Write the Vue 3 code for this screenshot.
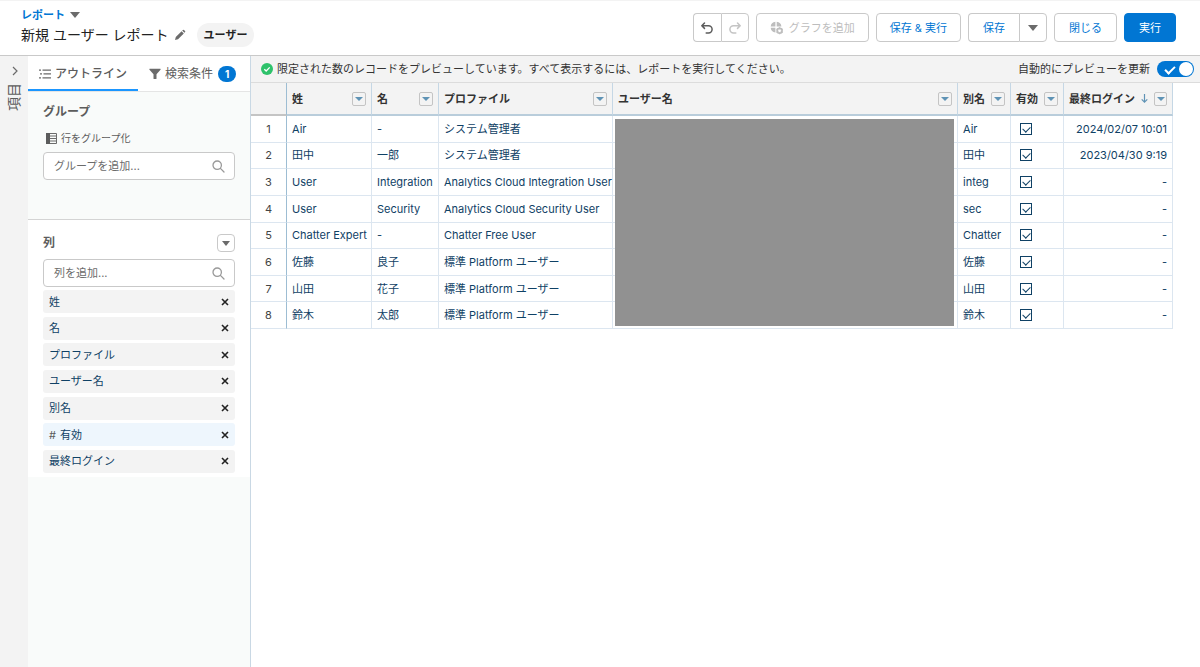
<script setup>
import {ref} from 'vue';

// プレビュー表の列定義
const columns = [
  { key: 'last', label: '姓' },
  { key: 'first', label: '名' },
  { key: 'profile', label: 'プロファイル' },
  { key: 'username', label: 'ユーザー名' },
  { key: 'alias', label: '別名' },
  { key: 'active', label: '有効' },
  { key: 'login', label: '最終ログイン', sorted: true }
];

// プレビュー表のレコード
const rows = [
  { last: 'Air', first: '-', profile: 'システム管理者', alias: 'Air', login: '2024/02/07 10:01' },
  { last: '田中', first: '一郎', profile: 'システム管理者', alias: '田中', login: '2023/04/30 9:19' },
  { last: 'User', first: 'Integration', profile: 'Analytics Cloud Integration User', alias: 'integ', login: '-' },
  { last: 'User', first: 'Security', profile: 'Analytics Cloud Security User', alias: 'sec', login: '-' },
  { last: 'Chatter Expert', first: '-', profile: 'Chatter Free User', alias: 'Chatter', login: '-' },
  { last: '佐藤', first: '良子', profile: '標準 Platform ユーザー', alias: '佐藤', login: '-' },
  { last: '山田', first: '花子', profile: '標準 Platform ユーザー', alias: '山田', login: '-' },
  { last: '鈴木', first: '太郎', profile: '標準 Platform ユーザー', alias: '鈴木', login: '-' }
];

const autoPreview = ref(true);
const groupText = ref('');
const columnText = ref('');
</script>

<template>
  <div class="page">
    <header class="header">
      <div class="titles">
        <a href="#" class="crumb">レポート<span class="caret"></span></a>
        <div class="title-row">
          <h1>新規 ユーザー レポート</h1>
          <button class="plain" aria-label="名前を編集">
            <svg width="12" height="12" viewBox="0 0 12 12" fill="#6b6b6b"><path d="M1 11l.8-3L7.600 2.200l2.200 2.200L4 10.200zM8.200 1.600l.7-.7q.5-.4 1 0l1.200 1.200q.4.500 0 1l-.7.700z"/></svg>
          </button>
          <span class="pill">ユーザー</span>
        </div>
      </div>
      <div class="actions">
        <div class="joined">
          <button class="btn icon" aria-label="元に戻す">
            <svg width="14" height="14" viewBox="0 0 14 14" fill="none" stroke="#5c5c5c" stroke-width="1.500" stroke-linecap="round" stroke-linejoin="round"><path d="M4.500 2L1.800 4.700l2.700 2.700M2 4.700h6.500a3.600 3.600 0 0 1 0 7.200H6.200"/></svg>
          </button>
          <button class="btn icon" aria-label="やり直す" disabled>
            <svg width="14" height="14" viewBox="0 0 14 14" fill="none" stroke="#c4c4c4" stroke-width="1.500" stroke-linecap="round" stroke-linejoin="round"><path d="M9.500 2l2.700 2.700-2.700 2.700M12 4.700H5.500a3.600 3.600 0 0 0 0 7.200h2.300"/></svg>
          </button>
        </div>
        <button class="btn long" disabled>
          <svg width="14" height="14" viewBox="0 0 14 14"><path fill="#bdbdbd" d="M5.400.8v4.700H.7A5.200 5.200 0 0 1 5.400.8zM6.700.8a5.200 5.200 0 0 1 4.700 4.700H6.700zM.7 6.800h4.700v4.700A5.200 5.200 0 0 1 .7 6.800z"/><circle cx="9.600" cy="9.800" r="2.500" fill="none" stroke="#bdbdbd" stroke-width="1.600"/><path stroke="#bdbdbd" stroke-width="1.200" d="M9.600 6.300v7M6.600 8.100l6 3.500M12.600 8.100l-6 3.500"/><circle cx="9.600" cy="9.800" r="1.400" fill="#fff"/></svg>
          グラフを追加
        </button>
        <button class="btn long">保存 &amp; 実行</button>
        <div class="joined">
          <button class="btn">保存</button>
          <button class="btn icon" aria-label="その他の保存オプション"><span class="caret"></span></button>
        </div>
        <button class="btn">閉じる</button>
        <button class="btn brand">実行</button>
      </div>
    </header>

    <div class="body">
      <aside class="fields">
        <button class="plain" aria-label="項目パネルを開く">
          <svg width="8" height="10" viewBox="0 0 8 10" fill="none" stroke="#6b6b6b" stroke-width="1.200"><path d="M3 1l4 4-4 4"/></svg>
        </button>
        <span class="fields-label">項目</span>
      </aside>

      <aside class="panel">
        <nav class="tabs">
          <button class="tab current">
            <svg width="12" height="10" viewBox="0 0 12 10" fill="#6b6b6b"><path d="M0 .5h2v1.300H0zM3.500.5H12v1.300H3.500zM1 4.300h2v1.300H1zM4.500 4.300H12v1.300H4.500zM0 8.200h2v1.300H0zM3.500 8.200H12v1.300H3.500z"/></svg>
            アウトライン
          </button>
          <button class="tab">
            <svg width="12" height="12" viewBox="0 0 12 12" fill="#6b6b6b"><path d="M.6.8h10.800q.5.300.1.900L7.500 6.300v4.200q0 .6-.6.600H5.100q-.6 0-.6-.6V6.300L.5 1.700Q.1 1.100.6.8z"/></svg>
            検索条件
            <span class="badge">1</span>
          </button>
        </nav>

        <section class="groups">
          <h2>グループ</h2>
          <label for="group-add" class="sub-label">
            <svg width="11" height="11" viewBox="0 0 11 11"><path fill="none" stroke="#6b6b6b" d="M.5.500h10v10H.5zM4 3h6M4 5.500h6M4 8h6"/><path fill="#5c5c5c" d="M0 0h4v11H0z"/></svg>
            行をグループ化
          </label>
          <div class="search">
            <input id="group-add" v-model="groupText" type="text" placeholder="グループを追加...">
            <svg width="13" height="13" viewBox="0 0 13 13" fill="none" stroke="#999" stroke-width="1.300" stroke-linecap="round"><circle cx="5.200" cy="5.200" r="4.200"/><path d="M8.400 8.400l3.600 3.600"/></svg>
          </div>
        </section>

        <section class="columns">
          <div class="columns-head">
            <h2><label for="column-add">列</label></h2>
            <button class="menu-button" aria-label="列のアクション"><span class="caret"></span></button>
          </div>
          <div class="search">
            <input id="column-add" v-model="columnText" type="text" placeholder="列を追加...">
            <svg width="13" height="13" viewBox="0 0 13 13" fill="none" stroke="#999" stroke-width="1.300" stroke-linecap="round"><circle cx="5.200" cy="5.200" r="4.200"/><path d="M8.400 8.400l3.600 3.600"/></svg>
          </div>
          <ul class="chips">
            <li v-for="col in columns" :key="col.key" :class="['chip', { numeric: col.key === 'active' }]">
              <span><span v-if="col.key === 'active'" class="hash">#</span>{{ col.label }}</span>
              <button class="plain" :aria-label="col.label + 'を削除'">
                <svg width="8" height="8" viewBox="0 0 8 8" stroke="#222" stroke-width="1.600"><path d="M1 1l6 6M7 1L1 7"/></svg>
              </button>
            </li>
          </ul>
        </section>
      </aside>

      <main class="preview">
        <div class="notice">
          <svg width="12" height="12" viewBox="0 0 12 12"><circle cx="6" cy="6" r="6" fill="#2ec26b"/><path d="M3.300 6.200l1.900 1.800 3.500-3.600" fill="none" stroke="#fff" stroke-width="1.300"/></svg>
          <span class="notice-text">限定された数のレコードをプレビューしています。すべて表示するには、レポートを実行してください。</span>
          <label for="auto-preview">自動的にプレビューを更新</label>
          <input id="auto-preview" v-model="autoPreview" type="checkbox" class="toggle">
        </div>
        <div class="sheet">
          <table>
            <colgroup>
              <col class="w-num">
              <col v-for="col in columns" :key="col.key" :class="'w-' + col.key">
            </colgroup>
            <thead>
              <tr>
                <th class="num"></th>
                <th v-for="col in columns" :key="col.key">
                  <div class="th-inner">
                    <span class="th-label">{{ col.label }}</span>
                    <svg v-if="col.sorted" width="7" height="9" viewBox="0 0 7 9" fill="none" stroke="#5f93b5" stroke-width="1.200"><path d="M3.500 0v8M.7 5.300l2.800 2.800 2.800-2.800"/></svg>
                    <button class="sort" :aria-label="col.label + 'のアクション'"><span></span></button>
                  </div>
                </th>
              </tr>
            </thead>
            <tbody>
              <tr v-for="(row, index) in rows" :key="index">
                <td class="num">{{ index + 1 }}</td>
                <td>{{ row.last }}</td>
                <td>{{ row.first }}</td>
                <td>{{ row.profile }}</td>
                <td></td>
                <td>{{ row.alias }}</td>
                <td><input type="checkbox" class="check" checked :aria-label="row.last + ' 有効'"></td>
                <td class="right">{{ row.login }}</td>
              </tr>
            </tbody>
          </table>
          <div class="mask"></div>
        </div>
      </main>
    </div>
  </div>
</template>

<style>
body {
  margin: 0;
}
</style>

<style scoped>
.page {
  display: flex;
  flex-direction: column;
  min-height: 100vh;
  box-sizing: border-box;
  border-top: 1px solid #f3f3f3;
  font-family: Inter, "Noto Sans CJK JP", sans-serif;
  font-size: 11px;
  line-height: 16px;
  color: #333;
  background: #fff;
}

.page * {
  box-sizing: border-box;
}

button, input {
  font: inherit;
  color: inherit;
  margin: 0;
}

button {
  cursor: pointer;
}

h1, h2 {
  margin: 0;
}

svg {
  display: block;
  flex: none;
}

.plain {
  display: flex;
  padding: 0;
  border: 0;
  background: none;
}

.caret {
  display: inline-block;
  border: 5px solid transparent;
  border-top: 6px solid #6b6b6b;
  border-bottom: 0;
}

/* ヘッダー */
.header {
  display: flex;
  justify-content: space-between;
  height: 55px;
  padding: 0 24px 0 21px;
  border-bottom: 1px solid #c9c9c9;
}

.titles {
  padding-top: 6px;
}

.crumb {
  display: flex;
  align-items: center;
  gap: 5px;
  color: #0176d3;
  font-weight: 700;
  text-decoration: none;
}

.title-row {
  display: flex;
  align-items: center;
  gap: 5px;
}

.title-row h1 {
  font-size: 14px;
  font-weight: 400;
  line-height: 24px;
  color: #222;
}

.pill {
  margin-left: 6px;
  padding: 4px 7px;
  border-radius: 12px;
  background: #f3f3f3;
  color: #222;
  font-weight: 700;
}

.actions {
  display: flex;
  gap: 7px;
  padding-top: 12px;
}

.joined {
  display: flex;
}

.btn {
  display: flex;
  align-items: center;
  justify-content: center;
  gap: 5px;
  height: 29px;
  padding: 0 14px;
  border: 1px solid #c9c9c9;
  border-radius: 4px;
  background: #fff;
  color: #0176d3;
  white-space: nowrap;
}

.btn.long {
  padding: 0 13px;
}

.btn:disabled {
  color: #bdbdbd;
}

.btn.icon {
  width: 28px;
  padding: 0;
}

.btn.brand {
  border-color: #0176d3;
  background: #0176d3;
  color: #fff;
}

.joined .btn:first-child {
  border-radius: 4px 0 0 4px;
  border-right: 0;
}

.joined .btn:last-child {
  border-radius: 0 4px 4px 0;
}

/* 本体 */
.body {
  display: flex;
  flex: 1;
}

.fields {
  display: flex;
  flex-direction: column;
  align-items: center;
  gap: 7px;
  width: 28px;
  padding-top: 10px;
  background: #f3f3f3;
}

.fields-label {
  writing-mode: vertical-rl;
  text-orientation: sideways;
  transform: rotate(180deg);
  font-size: 14px;
  color: #5c5c5c;
}

.panel {
  width: 223px;
  border-right: 1px solid #c9d8e4;
  background: #f9fbfa;
}

.tabs {
  display: flex;
  height: 36px;
  border-bottom: 1px solid #e5e5e5;
  background: #fff;
}

.tab {
  display: flex;
  align-items: center;
  gap: 4px;
  height: 35px;
  padding: 2px 11px 0;
  border: 0;
  border-bottom: 2px solid transparent;
  background: none;
  font-size: 12px;
  color: #5c5c5c;
  white-space: nowrap;
}

.tab.current {
  border-bottom-color: #1b96ff;
  font-weight: 500;
}

.badge {
  width: 18px;
  margin-left: 1px;
  border-radius: 8px;
  background: #0176d3;
  color: #fff;
  font-size: 10px;
  font-weight: 700;
}

.groups {
  height: 128px;
  padding: 11px 15px 0;
  border-bottom: 1px solid #d4d4d4;
}

.panel h2 {
  font-size: 12px;
  font-weight: 700;
  line-height: 18px;
  color: #5c5c5c;
}

.sub-label {
  display: flex;
  align-items: center;
  gap: 4px;
  padding: 9px 3px 6px;
  font-size: 10px;
  color: #5c5c5c;
}

.search {
  display: flex;
  align-items: center;
  height: 28px;
  padding: 0 9px 0 10px;
  border: 1px solid #c9c9c9;
  border-radius: 4px;
  background: #fff;
}

.search input {
  flex: 1;
  min-width: 0;
  padding: 0;
  border: 0;
  outline: 0;
  background: none;
}

.search input::placeholder {
  color: #6b6b6b;
}

.columns {
  padding: 14px 15px 4px;
  background: #fff;
}

.columns-head {
  display: flex;
  align-items: center;
  justify-content: space-between;
  padding-bottom: 7px;
}

.menu-button {
  display: flex;
  align-items: center;
  justify-content: center;
  width: 18px;
  height: 18px;
  padding: 0;
  border: 1px solid #c9c9c9;
  border-radius: 4px;
  background: #fff;
}

.menu-button .caret {
  border-width: 5px 4px 0;
}

.chips {
  display: flex;
  flex-direction: column;
  justify-content: space-between;
  height: 183px;
  margin: 3px 0 0;
  padding: 0;
  list-style: none;
}

.chip {
  display: flex;
  align-items: center;
  justify-content: space-between;
  height: 23px;
  padding: 0 6px;
  border-radius: 3px;
  background: #f3f3f3;
  color: #0f4165;
}

.chip.numeric {
  background: #eef6fd;
}

.hash {
  margin-right: 4px;
  color: #5c5c5c;
}

/* プレビュー */
.preview {
  flex: 1;
  min-width: 0;
}

.notice {
  display: flex;
  align-items: center;
  gap: 4px;
  height: 27px;
  padding: 0 6px 0 10px;
  border-bottom: 1px solid #dcdcdc;
  background: #f3f3f3;
}

.notice-text {
  flex: 1;
}

.toggle {
  display: flex;
  align-items: center;
  appearance: none;
  position: relative;
  width: 37px;
  height: 16px;
  margin-left: 3px;
  border-radius: 8px;
  background: #8c8c8c;
}

.toggle::before {
  content: '';
  position: absolute;
  left: 1px;
  width: 14px;
  height: 14px;
  border-radius: 7px;
  background: #fff;
}

.toggle:checked {
  background: #0176d3;
}

.toggle:checked::before {
  left: 22px;
}

.toggle:checked::after {
  content: '';
  position: absolute;
  left: 10px;
  top: 3px;
  width: 4px;
  height: 8px;
  border: solid #fff;
  border-width: 0 2px 2px 0;
  transform: rotate(45deg);
}

.sheet {
  position: relative;
  margin-right: 27px;
}

table {
  width: 100%;
  height: 246px;
  table-layout: fixed;
  border-collapse: separate;
  border-spacing: 0;
}

.w-num {
  width: 36px;
}

.w-last {
  width: 85px;
}

.w-first {
  width: 67px;
}

.w-profile {
  width: 174px;
}

.w-alias,
.w-active {
  width: 53px;
}

.w-login {
  width: 109px;
}

th {
  height: 33px;
  padding: 0 5px;
  border-right: 1px solid #c5d7e5;
  border-bottom: 2px solid #b9cddb;
  background: #f3f3f3;
  font-weight: 700;
  text-align: left;
}

.th-inner {
  display: flex;
  align-items: center;
  gap: 6px;
}

.th-label {
  flex: 1;
  white-space: nowrap;
}

.sort {
  display: flex;
  align-items: center;
  justify-content: center;
  width: 14px;
  height: 14px;
  padding: 0;
  border: 1px solid #c4c4c4;
  border-radius: 2px;
  background: #f3f3f3;
}

.sort span {
  border: 4px solid transparent;
  border-top-color: #5f93b5;
  border-bottom: 0;
}

td {
  padding: 0 5px;
  border-right: 1px solid #dce6f0;
  border-bottom: 1px solid #dce6f0;
  color: #0f4165;
  white-space: nowrap;
}

.num {
  border-right-color: #9dbdd3;
  text-align: center;
  color: #444;
}

th.num {
  border-bottom-color: #c4c4c4;
}

.right {
  text-align: right;
}

.check {
  display: block;
  appearance: none;
  position: relative;
  width: 12px;
  height: 12px;
  margin-left: 4px;
  border: 1px solid #0f4165;
}

.check:checked::after {
  content: '';
  position: absolute;
  left: 3px;
  top: 1px;
  width: 4px;
  height: 6px;
  border: solid #0f4165;
  border-width: 0 1px 1px 0;
  transform: rotate(45deg);
}

/* ユーザー名の値を隠す */
.mask {
  position: absolute;
  top: 36px;
  right: 219px;
  bottom: 3px;
  left: 364px;
  background: #919191;
}
</style>
